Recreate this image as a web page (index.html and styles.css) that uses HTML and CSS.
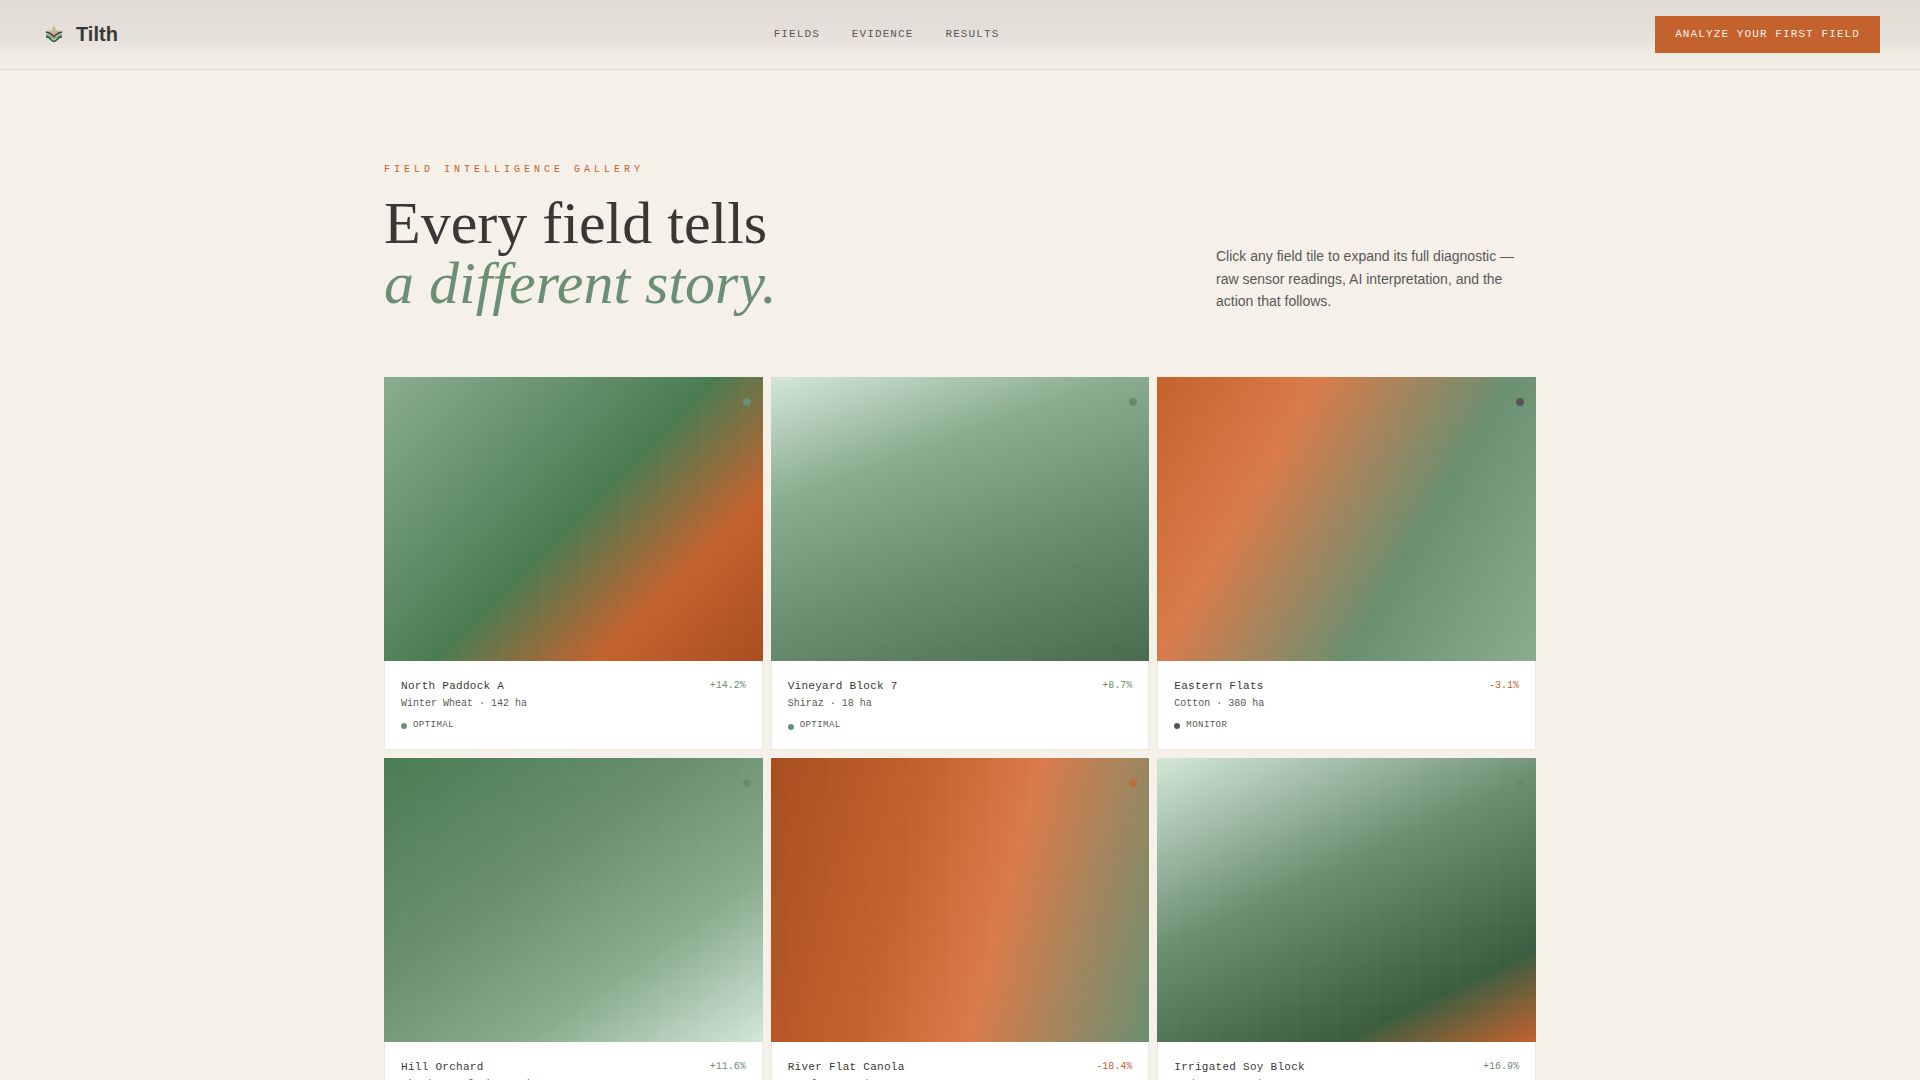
FILE: index.html
```html
<!DOCTYPE html>
<html lang="en">
<head>
    <meta charset="UTF-8">
    <meta name="viewport" content="width=device-width, initial-scale=1.0">
    <title>Tilth</title>
    <link rel="stylesheet" href="styles.css">
</head>
<body>
    <header class="nav">
        <a class="brand" href="#">
            <svg class="brand-mark" viewBox="0 0 28 28" fill="none">
                <path d="M14 4.500 C11.500 8 11.500 12 14 15.500 C16.500 12 16.500 8 14 4.500Z" fill="#b3bd98"/>
                <path d="M9 9.500 Q12.500 10.500 14 14.500 Q15.500 10.500 19 9.500" stroke="#d9a98c" stroke-width="1.800"/>
                <path d="M6 11 Q10.500 11.500 14 16 Q17.500 11.500 22 11" stroke="#3d3a36" stroke-width="1.700"/>
                <path d="M6 13.500 Q10.500 14 14 18 Q17.500 14 22 13.500" stroke="#8aad8f" stroke-width="1.800"/>
                <path d="M6 15.500 Q9.500 16 11.500 19 Q14 21.800 16.500 19 Q18.500 16 22 15.500" stroke="#3b5e41" stroke-width="1.800"/>
            </svg>
            <span class="brand-name">Tilth</span>
        </a>
        <nav class="nav-links">
            <a href="#fields">Fields</a>
            <a href="#evidence">Evidence</a>
            <a href="#results">Results</a>
        </nav>
        <a class="nav-cta" href="#start">Analyze your first field</a>
    </header>

    <main class="gallery" id="fields">
        <div class="gallery-head">
            <div>
                <p class="eyebrow">Field Intelligence Gallery</p>
                <h1>Every field tells<br><em>a different story.</em></h1>
            </div>
            <p class="intro">Click any field tile to expand its full diagnostic — raw sensor readings, AI interpretation, and the action that follows.</p>
        </div>

        <div class="grid">
            <article class="tile">
                <div class="tile-map map-north"><span class="pin teal"></span></div>
                <div class="tile-body">
                    <div class="tile-row"><h2>North Paddock A</h2><span class="delta">+14.2%</span></div>
                    <p class="crop">Winter Wheat · 142 ha</p>
                    <p class="status"><i class="dot"></i>Optimal</p>
                </div>
            </article>
            <article class="tile">
                <div class="tile-map map-vineyard"><span class="pin"></span></div>
                <div class="tile-body">
                    <div class="tile-row"><h2>Vineyard Block 7</h2><span class="delta">+8.7%</span></div>
                    <p class="crop">Shiraz · 18 ha</p>
                    <p class="status"><i class="dot"></i>Optimal</p>
                </div>
            </article>
            <article class="tile">
                <div class="tile-map map-eastern"><span class="pin dark"></span></div>
                <div class="tile-body">
                    <div class="tile-row"><h2>Eastern Flats</h2><span class="delta down">-3.1%</span></div>
                    <p class="crop">Cotton · 380 ha</p>
                    <p class="status"><i class="dot dark"></i>Monitor</p>
                </div>
            </article>
            <article class="tile">
                <div class="tile-map map-orchard"><span class="pin"></span></div>
                <div class="tile-body">
                    <div class="tile-row"><h2>Hill Orchard</h2><span class="delta">+11.6%</span></div>
                    <p class="crop">Mixed Stonefruit · 8 ha</p>
                    <p class="status"><i class="dot"></i>Optimal</p>
                </div>
            </article>
            <article class="tile">
                <div class="tile-map map-river"><span class="pin orange"></span></div>
                <div class="tile-body">
                    <div class="tile-row"><h2>River Flat Canola</h2><span class="delta down">-18.4%</span></div>
                    <p class="crop">Canola · 210 ha</p>
                    <p class="status"><i class="dot orange"></i>Alert</p>
                </div>
            </article>
            <article class="tile">
                <div class="tile-map map-soy"><span class="pin"></span></div>
                <div class="tile-body">
                    <div class="tile-row"><h2>Irrigated Soy Block</h2><span class="delta">+16.9%</span></div>
                    <p class="crop">Soybean · 210 ha</p>
                    <p class="status"><i class="dot"></i>Optimal</p>
                </div>
            </article>
        </div>
    </main>
</body>
</html>
```

FILE: styles.css
```css
* {
    margin: 0;
    padding: 0;
    box-sizing: border-box;
}
html, body {
    height: 100%;
    overflow: hidden;
}
body {
    background: #f5f0e8;
    color: #3a3835;
    font-family: "Liberation Sans", Arial, sans-serif;
}
a {
    color: inherit;
    text-decoration: none;
}

/* top bar */
.nav {
    display: flex;
    align-items: center;
    justify-content: space-between;
    height: 70px;
    padding: 0 40px;
    border-bottom: 1px solid #dfdad3;
    background: linear-gradient(#e1dcd5 0, #e2ddd6 20px, #e7e2db 42px, #f0ebe4 56px, #f4efe7 69px);
}
.brand {
    display: flex;
    align-items: center;
    gap: 8px;
}
.brand-mark {
    width: 28px;
    height: 28px;
}
.brand-name {
    font-size: 20px;
    font-weight: 700;
}
.nav-links {
    display: flex;
    gap: 32px;
    padding-bottom: 1px;
    color: #5a5856;
}
.nav-links a, .nav-cta {
    font-family: "Liberation Mono", monospace;
    font-size: 11px;
    letter-spacing: 0.1em;
    text-transform: uppercase;
}
.nav-cta {
    padding: 12px 20px;
    line-height: 13px;
    background: #c4622d;
    color: #f5f0e8;
}

/* gallery heading */
.gallery {
    width: 1152px;
    margin: 0 auto;
    padding-top: 92px;
}
.gallery-head {
    display: flex;
    align-items: flex-end;
    justify-content: space-between;
    margin-bottom: 64px;
}
.eyebrow {
    margin-bottom: 16px;
    font-family: "Liberation Mono", monospace;
    font-size: 10px;
    line-height: 15px;
    letter-spacing: 0.4em;
    text-transform: uppercase;
    color: #c4622d;
}
h1 {
    font-family: "Liberation Serif", serif;
    font-size: 60px;
    font-weight: 400;
    line-height: 60px;
}
h1 em {
    color: #6b8f71;
}
.intro {
    width: 320px;
    font-size: 14px;
    line-height: 22.75px;
    color: #5a5856;
}

/* field tiles */
.grid {
    display: grid;
    grid-template-columns: repeat(3, 1fr);
    gap: 8px;
}
.tile-map {
    position: relative;
    aspect-ratio: 4 / 3;
}
.tile-map::after {
    content: "";
    position: absolute;
    inset: 0;
    background:
        repeating-linear-gradient(0deg, transparent 0 19px, rgba(255, 255, 255, 0.02) 19px 20px),
        repeating-linear-gradient(90deg, transparent 0 19px, rgba(255, 255, 255, 0.02) 19px 20px);
}
.map-north {
    background: linear-gradient(135deg, #8aad8f 0%, #4a7c52 50%, #c4622d 75%, #a84e20 100%);
}
.map-vineyard {
    background: linear-gradient(160deg, #d4e6d8 0%, #8aad8f 30%, #6b8f71 60%, #4a6b4e 100%);
}
.map-eastern {
    background: linear-gradient(120deg, #c4622d 0%, #d97b4a 30%, #6b8f71 65%, #8aad8f 100%);
}
.map-orchard {
    background: linear-gradient(145deg, #4a7c52 0%, #6b8f71 40%, #8aad8f 70%, #d4e6d8 100%);
}
.map-river {
    background: linear-gradient(105deg, #a84e20 0%, #c4622d 35%, #d97b4a 60%, #6b8f71 100%);
}
.map-soy {
    background: linear-gradient(155deg, #d4e6d8 0%, #6b8f71 42%, #3b5e41 80%, #c4622d 100%);
}
.pin {
    position: absolute;
    top: 21px;
    right: 12px;
    width: 8px;
    height: 8px;
    border-radius: 50%;
    background: #638c6a;
}
.pin.teal { background: #6b8f71; }
.pin.dark { background: #555556; }
.pin.orange { background: #c4622d; opacity: 0.75; }

.tile-body {
    height: 89px;
    padding: 16px;
    border: 1px solid #ebe7e2;
    border-top: 0;
    background: #fff;
    font-family: "Liberation Mono", monospace;
}
.tile-row {
    display: flex;
    justify-content: space-between;
    height: 17px;
}
.tile-row h2 {
    font-size: 11px;
    font-weight: 400;
    line-height: 18px;
    letter-spacing: 0.025em;
}
.delta {
    font-size: 10px;
    line-height: 17px;
    color: #6b8f71;
}
.delta.down { color: #c4622d; }
.crop {
    margin-top: 2px;
    font-size: 10px;
    line-height: 15px;
    color: #5a5856;
}
.status {
    display: flex;
    align-items: center;
    gap: 6px;
    margin-top: 8px;
    font-size: 9px;
    line-height: 13px;
    letter-spacing: 0.05em;
    text-transform: uppercase;
    color: #5a5856;
}
.dot {
    width: 6px;
    height: 6px;
    margin-top: 2px;
    border-radius: 50%;
    background: #6b8f71;
}
.dot.dark { background: #555556; }
.dot.orange { background: #c4622d; }
```
